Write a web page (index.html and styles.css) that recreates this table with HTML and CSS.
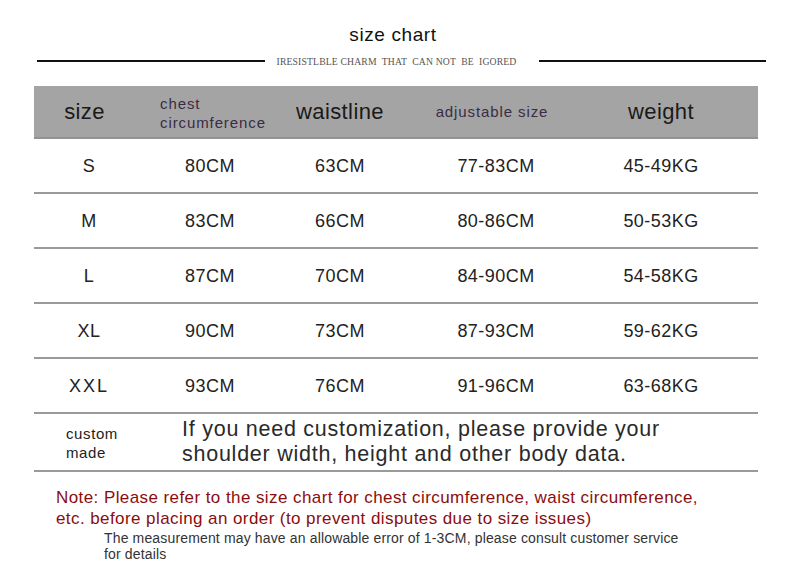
FILE: index.html
```html
<!DOCTYPE html>
<html>
<head>
<meta charset="utf-8">
<link rel="stylesheet" href="styles.css">
</head>
<body>
<div class="page">
  <h1 class="title">size chart</h1>
  <div class="rule">
    <span class="line"></span>
    <span class="tagline">IRESISTLBLE CHARM&nbsp; THAT&nbsp; CAN NOT&nbsp; BE&nbsp; IGORED</span>
    <span class="line"></span>
  </div>

  <div class="chart">
    <div class="row head">
      <div class="c c1 big">size</div>
      <div class="c c2 small left">chest<br>circumference</div>
      <div class="c c3 big">waistline</div>
      <div class="c c4 small">adjustable size</div>
      <div class="c c5 big">weight</div>
    </div>
    <div class="row">
      <div class="c c1">S</div><div class="c c2">80CM</div><div class="c c3">63CM</div><div class="c c4">77-83CM</div><div class="c c5">45-49KG</div>
    </div>
    <div class="row">
      <div class="c c1">M</div><div class="c c2">83CM</div><div class="c c3">66CM</div><div class="c c4">80-86CM</div><div class="c c5">50-53KG</div>
    </div>
    <div class="row">
      <div class="c c1">L</div><div class="c c2">87CM</div><div class="c c3">70CM</div><div class="c c4">84-90CM</div><div class="c c5">54-58KG</div>
    </div>
    <div class="row">
      <div class="c c1">XL</div><div class="c c2">90CM</div><div class="c c3">73CM</div><div class="c c4">87-93CM</div><div class="c c5">59-62KG</div>
    </div>
    <div class="row">
      <div class="c c1 xxl">XXL</div><div class="c c2">93CM</div><div class="c c3">76CM</div><div class="c c4">91-96CM</div><div class="c c5">63-68KG</div>
    </div>
    <div class="row custom">
      <div class="custom-label">custom<br>made</div>
      <div class="custom-text">If you need customization, please provide your<br>shoulder width, height and other body data.</div>
    </div>
  </div>

  <p class="note">Note: Please refer to the size chart for chest circumference, waist circumference,<br>etc. before placing an order (to prevent disputes due to size issues)</p>
  <p class="fine">The measurement may have an allowable error of 1-3CM, please consult customer service<br>for details</p>
</div>
</body>
</html>
```

FILE: styles.css
```css
* { box-sizing: border-box; }
html, body { margin: 0; padding: 0; background: #fff; }
body {
  font-family: "Liberation Sans", Arial, sans-serif;
  color: #222;
  width: 790px;
  height: 580px;
  overflow: hidden;
}
.page { padding-top: 24px; }
.title {
  margin: 0;
  font-weight: normal;
  font-size: 19px;
  letter-spacing: 0.6px;
  line-height: 22px;
  text-align: center;
  color: #111;
  padding-right: 4px;
}
.rule {
  display: flex;
  align-items: center;
  margin: 5px 24px 0 37px;
  height: 20px;
}
.line {
  flex: 1;
  height: 2px;
  background: #111;
}
.tagline {
  font-family: "Liberation Serif", "Times New Roman", serif;
  font-size: 9.7px;
  color: #555;
  margin: 0 22px 0 12px;
  white-space: nowrap;
  letter-spacing: 0.15px;
}
.chart {
  margin: 15px 32px 0 34px;
}
.row {
  display: grid;
  grid-template-columns: 110px 132px 128px 184px 146px 1fr;
  height: 55px;
  border-bottom: 2px solid #9a9a9a;
  align-items: center;
}
.row.head {
  height: 53px;
  background: #a4a4a4;
  border-bottom: 2px solid #939393;
}
.c {
  text-align: center;
  font-size: 18px;
  letter-spacing: 0.45px;
  color: #222;
}
.row:not(.head) .c { padding-top: 2px; }
.big { font-size: 22px; color: #1a1a1a; letter-spacing: 0.4px; }
.small { font-size: 15px; color: #3a2c44; line-height: 19px; letter-spacing: 0.9px; }
.head .left { text-align: left; padding-left: 16px; padding-top: 3px; }
.head .c1 { padding-right: 9px; }
.head .c4 { padding-right: 8px; }
.xxl { letter-spacing: 2px; }
.row.custom {
  display: flex;
  height: 58px;
  align-items: center;
}
.custom-label {
  width: 148px;
  padding-left: 32px;
  font-size: 15px;
  line-height: 19px;
  letter-spacing: 0.6px;
  color: #222;
  padding-top: 2px;
}
.custom-text {
  font-size: 21.5px;
  line-height: 25px;
  letter-spacing: 0.75px;
  color: #2a2a2a;
}
.note {
  margin: 15px 0 0 56px;
  font-size: 17px;
  line-height: 21px;
  letter-spacing: 0.42px;
  color: #8b0d0d;
}
.fine {
  margin: 1px 0 0 104px;
  font-size: 14px;
  line-height: 16px;
  letter-spacing: 0.15px;
  color: #333;
}
```
